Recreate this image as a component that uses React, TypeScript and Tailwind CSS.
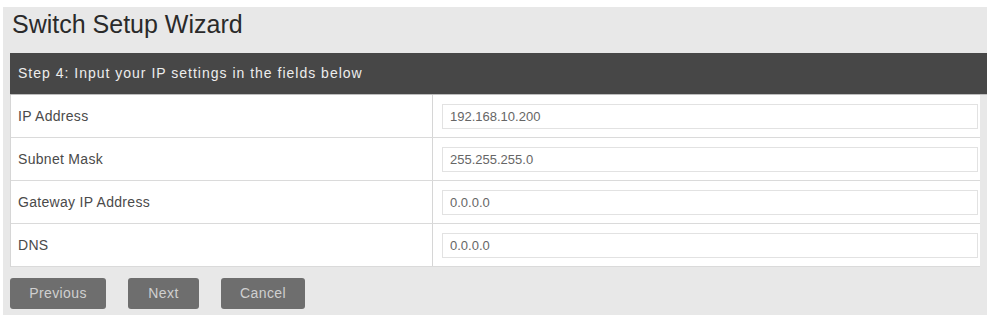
const fields = [
  { label: 'IP Address', value: '192.168.10.200' },
  { label: 'Subnet Mask', value: '255.255.255.0' },
  { label: 'Gateway IP Address', value: '0.0.0.0' },
  { label: 'DNS', value: '0.0.0.0' },
]

export default function App() {
  return (
    <div className="w-[990px] h-[315px] bg-white pt-[7px] pl-[3px] pr-[3px] font-['Liberation_Sans',Arial,sans-serif]">
      <div className="bg-[#e8e8e8] h-full pl-[7px] pr-0">
        <h1 className="text-[25px] leading-[35px] pb-[11px] text-[#2a2a2a] pl-[2px]">Switch Setup Wizard</h1>
        <div className="bg-[#474747] h-[42px] flex items-center px-[8px] text-[14px] tracking-[1px] text-[#ededed] border-b border-[#bdbdbd]">
          Step 4: Input your IP settings in the fields below
        </div>
        <div className="mr-[7px] bg-white border-l border-[#d6d6d6]">
          {fields.map((f) => (
            <div key={f.label} className="flex h-[43px] border-b border-[#dadada]">
              <div className="w-[422px] border-r border-[#d6d6d6] flex items-center pl-[7px] text-[14px] tracking-[0.3px] text-[#4a4a4a]">
                {f.label}
              </div>
              <div className="flex-1 flex items-center pl-[9px] pr-[2px]">
                <input
                  readOnly
                  value={f.value}
                  className="w-full h-[25px] border border-[#e2e2e2] px-[7px] text-[13px] text-[#666] outline-none"
                />
              </div>
            </div>
          ))}
        </div>
        <div className="flex gap-[22px] pt-[11px]">
          <button className="w-[96px] h-[31px] rounded-[3px] bg-[#6e6e6e] text-[14px] tracking-[0.4px] text-[#d0d0d0]">Previous</button>
          <button className="w-[71px] h-[31px] rounded-[3px] bg-[#6e6e6e] text-[14px] tracking-[0.4px] text-[#d0d0d0]">Next</button>
          <button className="w-[84px] h-[31px] rounded-[3px] bg-[#6e6e6e] text-[14px] tracking-[0.4px] text-[#d0d0d0]">Cancel</button>
        </div>
      </div>
    </div>
  )
}
